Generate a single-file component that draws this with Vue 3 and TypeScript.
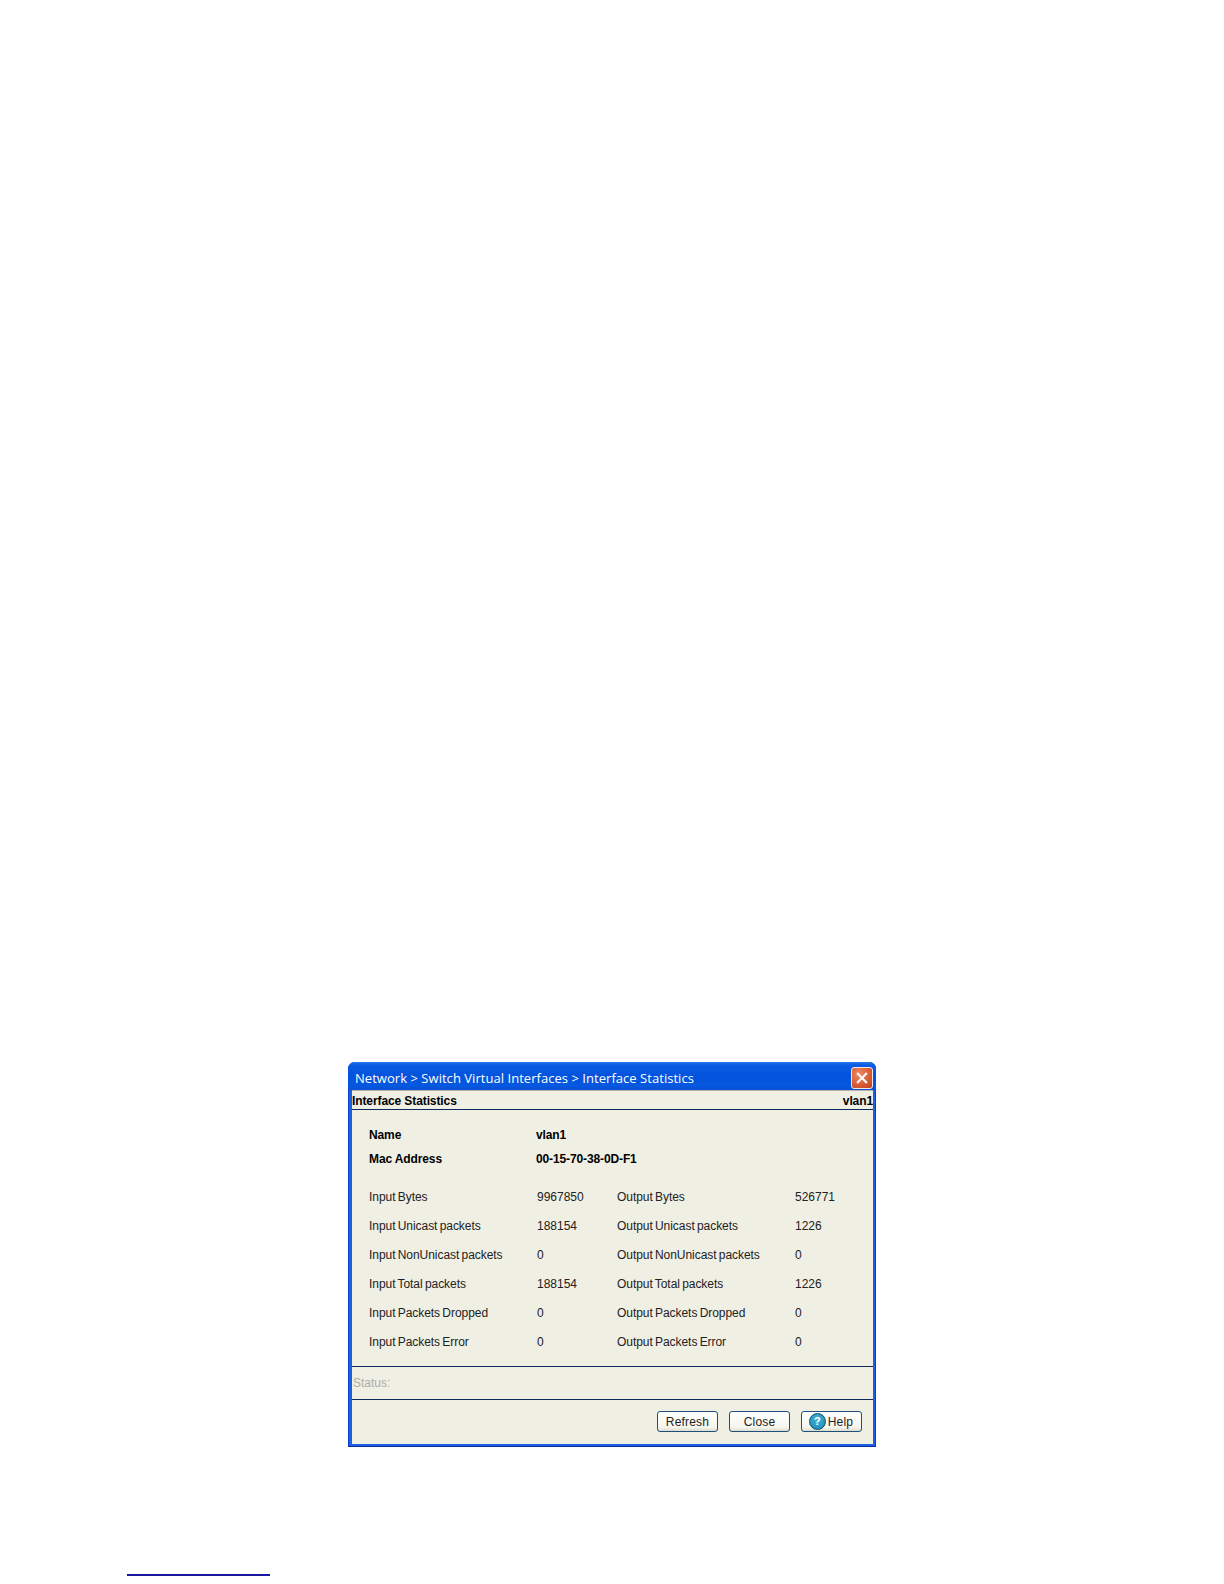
<script setup lang="ts">
interface Stat { label: string; input: string; output: string }
const stats: Stat[] = [
  { label: 'Bytes', input: '9967850', output: '526771' },
  { label: 'Unicast packets', input: '188154', output: '1226' },
  { label: 'NonUnicast packets', input: '0', output: '0' },
  { label: 'Total packets', input: '188154', output: '1226' },
  { label: 'Packets Dropped', input: '0', output: '0' },
  { label: 'Packets Error', input: '0', output: '0' },
]
</script>

<template>
  <div class="page">
    <section class="dialog">
      <header class="titlebar">
        <span class="title">Network &gt; Switch Virtual Interfaces &gt; Interface Statistics</span>
        <button class="close-x" aria-label="Close">
          <svg viewBox="0 0 20 20" width="14" height="14"><path d="M3 3 L17 17 M17 3 L3 17" stroke="#fff" stroke-width="3" fill="none" /></svg>
        </button>
      </header>
      <div class="body">
        <div class="head"><span>Interface Statistics</span><span>vlan1</span></div>
        <div class="ident">
          <span>Name</span><span>vlan1</span>
          <span>Mac Address</span><span>00-15-70-38-0D-F1</span>
        </div>
        <div class="stats">
          <template v-for="s in stats" :key="s.label">
            <span>Input {{ s.label }}</span>
            <span class="val">{{ s.input }}</span>
            <span>Output {{ s.label }}</span>
            <span class="val">{{ s.output }}</span>
          </template>
        </div>
        <div class="status">Status:</div>
        <footer class="actions">
          <button class="btn">Refresh</button>
          <button class="btn">Close</button>
          <button class="btn help"><i class="q">?</i>Help</button>
        </footer>
      </div>
    </section>
    <div class="rule"></div>
  </div>
</template>

<style>
html, body { margin: 0; background: #fff; }
</style>

<style scoped>
.page {
  width: 1224px;
  height: 1584px;
  padding-top: 1062px;
  box-sizing: border-box;
  overflow: hidden;
  background: #fff;
  font-family: "Liberation Sans", Arial, sans-serif;
  font-size: 12px;
  color: #222;
}
.dialog {
  margin-left: 348px;
  width: 528px;
  height: 385px;
  box-sizing: border-box;
  display: flex;
  flex-direction: column;
  border-radius: 7px 7px 0 0;
  background: #1a5fe6;
  box-shadow: inset 0 -1px 0 #0a2f9c, inset 1px 0 0 #0a3fc0, inset -1px 0 0 #0a3fc0;
  padding: 0 3px 3px 4px;
}
.titlebar {
  height: 28px;
  flex: none;
  margin: 0 -3px 0 -4px;
  padding: 3px 3px 0 7px;
  box-sizing: border-box;
  display: flex;
  align-items: center;
  justify-content: space-between;
  border-radius: 7px 7px 0 0;
  background: linear-gradient(#2a7aee 0, #0a5be4 3px, #0453dc 50%, #0558e0 85%, #0a4fd0 100%);
}
.title {
  color: #fff;
  font-family: "Open Sans", "Noto Sans", sans-serif;
  font-size: 13px;
  font-weight: 500;
  letter-spacing: 0.04px;
}
.close-x {
  width: 22px;
  height: 22px;
  padding: 0;
  display: flex;
  align-items: center;
  justify-content: center;
  border: 1px solid #f0e8e4;
  border-radius: 3px;
  background: radial-gradient(circle at 35% 30%, #ee8860, #d85a34 60%, #bc4018);
}
.body {
  flex: 1;
  display: flex;
  flex-direction: column;
  background: #f0efe4;
}
.head {
  height: 17px;
  padding-top: 1px;
  border-top: 1px solid #b4b4aa;
  border-bottom: 1px solid #0c2a5c;
  display: flex;
  align-items: center;
  justify-content: space-between;
  font-weight: 700;
  color: #000;
  letter-spacing: -0.1px;
}
.ident {
  padding: 13px 0 0 17px;
  display: grid;
  grid-template-columns: 167px 1fr;
  grid-auto-rows: 24px;
  align-items: center;
  font-weight: 700;
  color: #000;
  letter-spacing: -0.12px;
}
.stats {
  padding: 11px 0 0 17px;
  display: grid;
  grid-template-columns: 168px 80px 178px 1fr;
  grid-auto-rows: 29px;
  align-items: center;
  letter-spacing: -0.05px;
  word-spacing: -1px;
}
.val { letter-spacing: 0; }
.status {
  height: 32px;
  margin-top: 10px;
  padding-left: 1px;
  border-top: 1px solid #0c2a5c;
  border-bottom: 1px solid #0c2a5c;
  display: flex;
  align-items: center;
  color: #adada5;
}
.actions {
  flex: 1;
  display: flex;
  justify-content: flex-end;
  gap: 11px;
  padding: 11px 11px 0 0;
}
.btn {
  width: 61px;
  height: 21px;
  padding: 0;
  border: 1px solid #1f4f7c;
  border-radius: 3px;
  background: linear-gradient(#fff, #f6f6ee 80%, #dcdccc);
  font: 12px "Liberation Sans", Arial, sans-serif;
  letter-spacing: 0.2px;
  color: #222;
  display: flex;
  align-items: center;
  justify-content: center;
}
.help { gap: 2px; padding-right: 1px; }
.q {
  width: 17px;
  height: 17px;
  box-sizing: border-box;
  border: 1px solid #124a68;
  border-radius: 50%;
  background: radial-gradient(circle at 50% 35%, #45b4d8, #1a86b0);
  color: #fff;
  font: 700 11px/15px "Liberation Sans", Arial, sans-serif;
  letter-spacing: 0;
  text-align: center;
}
.rule {
  width: 143px;
  height: 2px;
  margin: 127px 0 0 127px;
  background: #1a1aa0;
}
</style>
